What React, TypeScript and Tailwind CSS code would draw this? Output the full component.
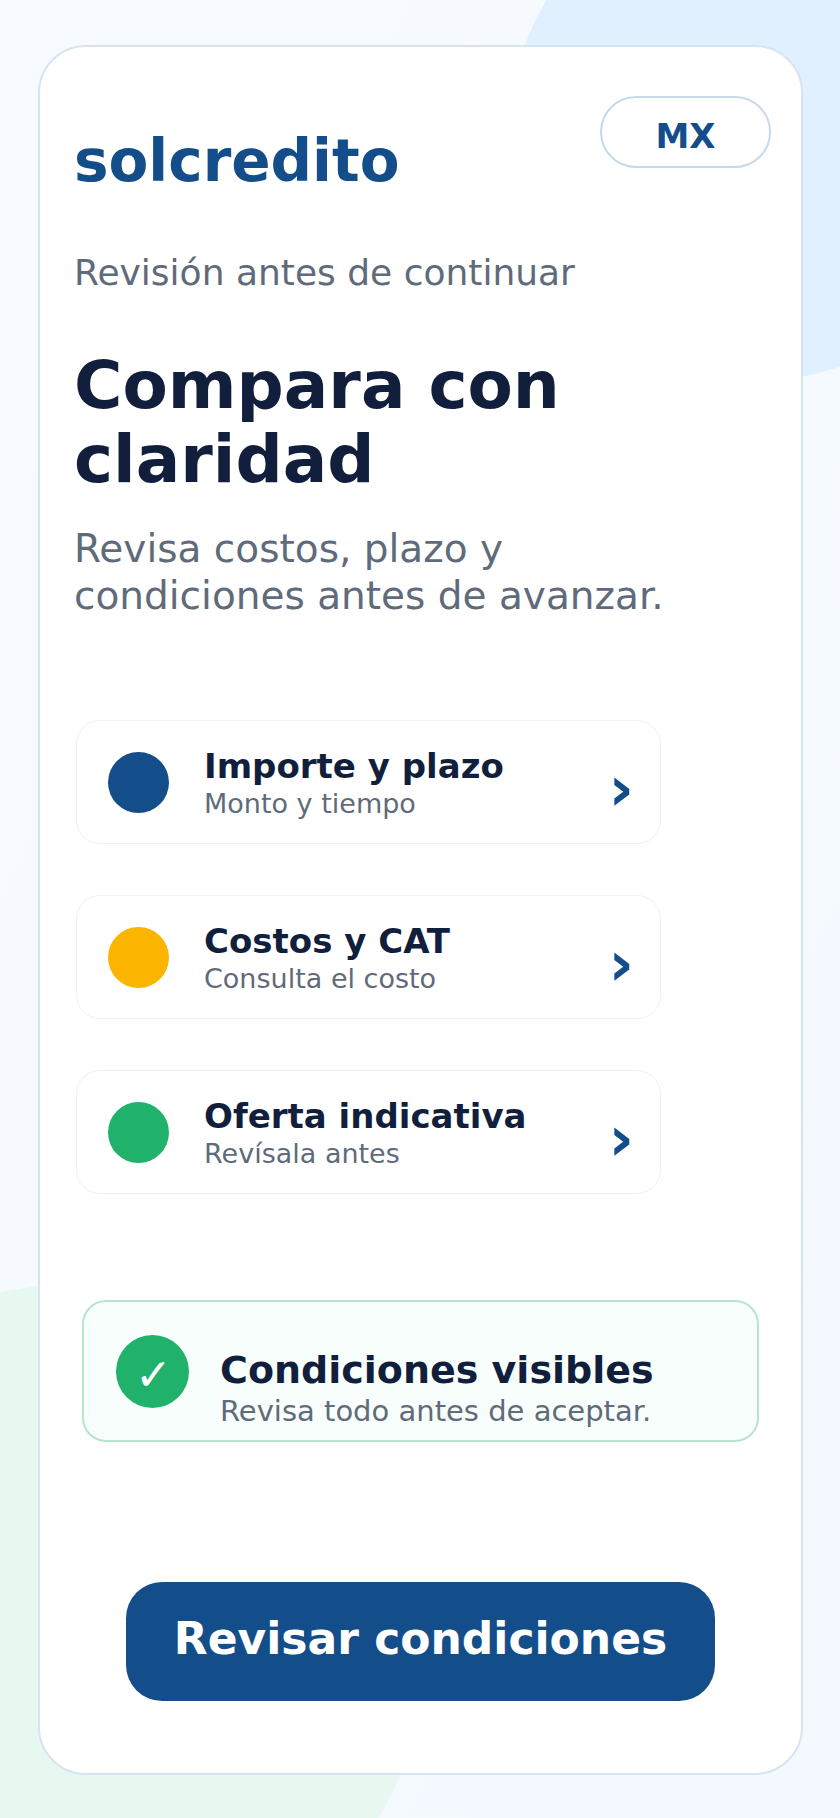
const rows = [
  { title: "Importe y plazo", sub: "Monto y tiempo", dot: "bg-[#134e8a]" },
  { title: "Costos y CAT", sub: "Consulta el costo", dot: "bg-[#fbb500]" },
  { title: "Oferta indicativa", sub: "Revísala antes", dot: "bg-[#20b26b]" },
];

export default function App() {
  return (
    <div className="relative h-[1818px] w-[840px] overflow-hidden bg-gradient-to-br from-[#f7fbff] to-[#f4f9ff] font-['DejaVu_Sans',sans-serif]">
      <div className="absolute left-[510px] top-[-120px] h-[500px] w-[500px] rounded-full bg-[#e0f0ff]" />
      <div className="absolute left-[-275px] top-[1284px] h-[704px] w-[704px] rounded-full bg-[#e6f8f0]" />

      <div className="relative ml-[38px] mt-[45px] inline-flex h-[1730px] w-[765px] flex-col rounded-[48px] border-2 border-[#d6e4f2] bg-white">
        <div className="flex items-start justify-between pl-[34px] pr-[30px] pt-[49px]">
          <div className="mt-[31px] text-[58px] font-bold leading-[68px] text-[#134e8a]">solcredito</div>
          <div className="flex h-[72px] w-[171px] items-center justify-center rounded-[36px] border-2 border-[#c5d9ea] pt-[8px] text-[34px] font-bold text-[#134e8a]">
            MX
          </div>
        </div>

        <p className="ml-[34px] mt-[56px] text-[36px] leading-[44px] text-[#5f6b7a]">Revisión antes de continuar</p>
        <h1 className="ml-[34px] mt-[54px] text-[66px] font-bold leading-[74px] text-[#111f3d]">
          Compara con
          <br />
          claridad
        </h1>
        <p className="ml-[34px] mt-[28px] text-[39px] leading-[47px] text-[#5f6b7a]">
          Revisa costos, plazo y
          <br />
          condiciones antes de avanzar.
        </p>

        <div className="ml-[36px] mt-[101px] flex w-[585px] flex-col gap-[51px]">
          {rows.map((row) => (
            <div key={row.title} className="flex h-[124px] items-center rounded-[24px] border border-[#eef2f6] bg-white pl-[31px] pr-[26px]">
              <div className={`h-[61px] w-[61px] shrink-0 rounded-full ${row.dot}`} />
              <div className="ml-[35px] min-w-0 flex-1 pt-[2px]">
                <div className="text-[34px] font-bold leading-[41px] text-[#111f3d]">{row.title}</div>
                <div className="text-[27px] leading-[33px] text-[#5f6b7a]">{row.sub}</div>
              </div>
              <div className="mt-[14px] text-[62px] font-bold leading-none text-[#134e8a]">›</div>
            </div>
          ))}
        </div>

        <div className="ml-[42px] mt-[106px] flex h-[142px] w-[677px] items-center rounded-[24px] border-2 border-[#b7e4cd] bg-[#f8fefb] pl-[32px]">
          <div className="flex h-[73px] w-[73px] shrink-0 items-center justify-center rounded-full bg-[#20b26b] pl-[2px] pt-[8px] text-[44px] text-white">✓</div>
          <div className="ml-[31px] pt-[32px]">
            <div className="text-[38px] font-bold leading-[47px] text-[#111f3d]">Condiciones visibles</div>
            <div className="text-[29px] leading-[34px] text-[#5f6b7a]">Revisa todo antes de aceptar.</div>
          </div>
        </div>

        <button type="button" className="mx-auto mt-[140px] block h-[119px] w-[589px] rounded-[36px] bg-[#134e8a] pb-[6px] text-[44px] font-bold text-white">
          Revisar condiciones
        </button>
      </div>
    </div>
  );
}
